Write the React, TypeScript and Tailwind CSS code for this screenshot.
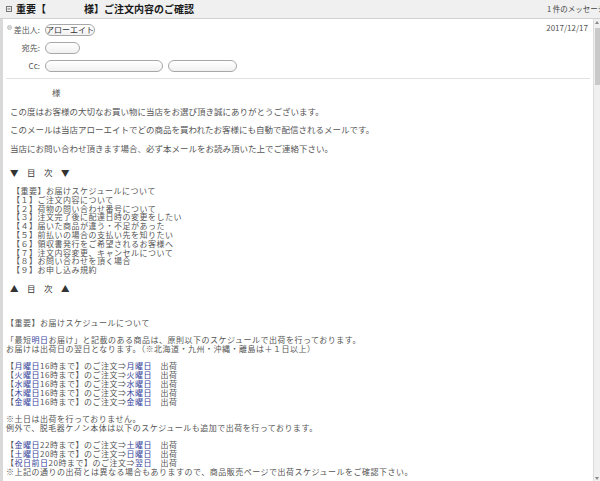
import React from "react";

const B = ({ children }: { children: React.ReactNode }) => (
  <span className="text-[#34439a]">{children}</span>
);

const Chip = ({ w, children }: { w: string; children?: React.ReactNode }) => (
  <div
    className={`${w} h-[12px] rounded-full border border-[#a8a8a8] bg-gradient-to-b from-white to-[#f1f1f1] flex items-center justify-center text-[8px] leading-none text-[#333]`}
  >
    {children}
  </div>
);

const Blank = () => <div className="h-[8px]" />;

const Sched = ({ a, t, b }: { a: string; t: string; b: string }) => (
  <div className="whitespace-nowrap">
    【<B>{a}</B>
    {t}】のご注文⇒<B>{b}</B>　出荷
  </div>
);

export default function App() {
  return (
    <div className="w-[600px] h-[481px] overflow-hidden bg-white flex flex-col font-['Noto_Sans_CJK_JP','Noto_Sans',sans-serif] text-[#555]">
      <header className="h-[19px] shrink-0 bg-[#f0f0f0] border-b border-[#d2d2d2] flex items-center pl-[6px] leading-none">
        <svg width="6" height="6" viewBox="0 0 6 6" className="shrink-0">
          <rect x="0.5" y="0.5" width="5" height="5" fill="none" stroke="#777" strokeWidth="1" />
          <line x1="1.5" y1="3" x2="4.5" y2="3" stroke="#777" strokeWidth="1" />
        </svg>
        <span className="ml-[4px] font-bold text-[10px] leading-none text-[#1a1a1a] whitespace-nowrap">
          重要【<span className="inline-block w-[38px]" />様】ご注文内容のご確認
        </span>
        <span className="ml-auto w-[53px] shrink-0 whitespace-nowrap text-[7.5px] leading-none text-[#444]">
          1 件のメッセージ
        </span>
      </header>
      <div className="flex flex-1 min-h-0">
        <div className="w-[3px] shrink-0 bg-[#d9d9d9]" />
        <div className="flex-1 min-w-0 flex flex-col">
          <div className="h-[60px] shrink-0 mx-[3px] border-b border-[#e2e2e2] flex flex-col pt-[5px] pr-[2px]">
            <div className="h-[12px] flex items-center">
              <div className="w-[34px] shrink-0 flex items-center h-full">
                <span className="w-[5px] h-[5px] rounded-full bg-[#d8d8d8] border border-[#c4c4c4] ml-[1px] -mt-[5px]" />
                <span className="ml-auto text-[8px] leading-none text-[#555]">差出人:</span>
              </div>
              <div className="ml-[5px]">
                <Chip w="w-[50px]">アローエイト</Chip>
              </div>
              <span className="ml-auto text-[8px] leading-none text-[#555] -mt-[5px]">2017/12/17</span>
            </div>
            <div className="h-[12px] flex items-center mt-[6px]">
              <div className="w-[34px] shrink-0 text-right text-[8px] leading-none text-[#555]">宛先:</div>
              <div className="ml-[5px]">
                <Chip w="w-[35px]" />
              </div>
            </div>
            <div className="h-[12px] flex items-center mt-[6px]">
              <div className="w-[34px] shrink-0 text-right text-[8px] leading-none text-[#555]">Cc:</div>
              <div className="ml-[5px] flex gap-[5px]">
                <Chip w="w-[118px]" />
                <Chip w="w-[69px]" />
              </div>
            </div>
          </div>

          <div className="text-[8.5px] pl-[7px]">
            <div className="leading-[18.5px] pt-[4px]">
              <div className="ml-[42px]">様</div>
              <div className="whitespace-nowrap">この度はお客様の大切なお買い物に当店をお選び頂き誠にありがとうございます。</div>
              <div className="whitespace-nowrap">このメールは当店アローエイトでどの商品を買われたお客様にも自動で配信されるメールです。</div>
              <div className="whitespace-nowrap">当店にお問い合わせ頂きます場合、必ず本メールをお読み頂いた上でご連絡下さい。</div>
            </div>
            <div className="leading-[18px] mt-[6px] text-[#333]">▼　目　次　▼</div>
            <div className="leading-[8.8px] mt-[6px] pl-[2px] whitespace-nowrap text-[8px] tracking-[0.5px]">
              <div>【重要】お届けスケジュールについて</div>
              <div>【１】ご注文内容について</div>
              <div>【２】荷物の問い合わせ番号について</div>
              <div>【３】注文完了後に配達日時の変更をしたい</div>
              <div>【４】届いた商品が違う・不足があった</div>
              <div>【５】前払いの場合の支払い先を知りたい</div>
              <div>【６】領収書発行をご希望されるお客様へ</div>
              <div>【７】注文内容変更、キャンセルについて</div>
              <div>【８】お問い合わせを頂く場合</div>
              <div>【９】お申し込み規約</div>
            </div>
            <div className="leading-[18px] mt-[4px] text-[#333]">▲　目　次　▲</div>
            <div className="leading-[9px] mt-[21px] -ml-[4px] whitespace-nowrap text-[8px] tracking-[0.5px]">
              <div>【重要】お届けスケジュールについて</div>
              <Blank />
              <div>
                「最短<B>明日</B>お届け」と記載のある商品は、原則以下のスケジュールで出荷を行っております。
              </div>
              <div>お届けは出荷日の翌日となります。（※北海道・九州・沖縄・離島は＋１日以上）</div>
              <Blank />
              <Sched a="月曜日" t="16時まで" b="月曜日" />
              <Sched a="火曜日" t="16時まで" b="火曜日" />
              <Sched a="水曜日" t="16時まで" b="水曜日" />
              <Sched a="木曜日" t="16時まで" b="木曜日" />
              <Sched a="金曜日" t="16時まで" b="金曜日" />
              <Blank />
              <div>※土日は出荷を行っておりません。</div>
              <div>例外で、脱毛器ケノン本体は以下のスケジュールも追加で出荷を行っております。</div>
              <Blank />
              <Sched a="金曜日" t="22時まで" b="土曜日" />
              <Sched a="土曜日" t="20時まで" b="日曜日" />
              <div>
                【<B>祝日前日</B>20時まで】のご注文⇒<B>翌日</B>　出荷
              </div>
              <div>※上記の通りの出荷とは異なる場合もありますので、商品販売ページで出荷スケジュールをご確認下さい。</div>
            </div>
          </div>
        </div>
        <div className="w-[7px] shrink-0 bg-[#f0f0f0] border-l border-[#dcdcdc] flex flex-col items-center">
          <div className="mt-[2px] w-0 h-0 border-l-[2px] border-r-[2px] border-b-[3px] border-l-transparent border-r-transparent border-b-[#888]" />
          <div className="mt-[4px] w-[5px] h-[57px] bg-[#c9c9c9]" />
          <div className="mt-auto mb-[1px] w-0 h-0 border-l-[2px] border-r-[2px] border-t-[3px] border-l-transparent border-r-transparent border-t-[#888]" />
        </div>
      </div>
    </div>
  );
}
